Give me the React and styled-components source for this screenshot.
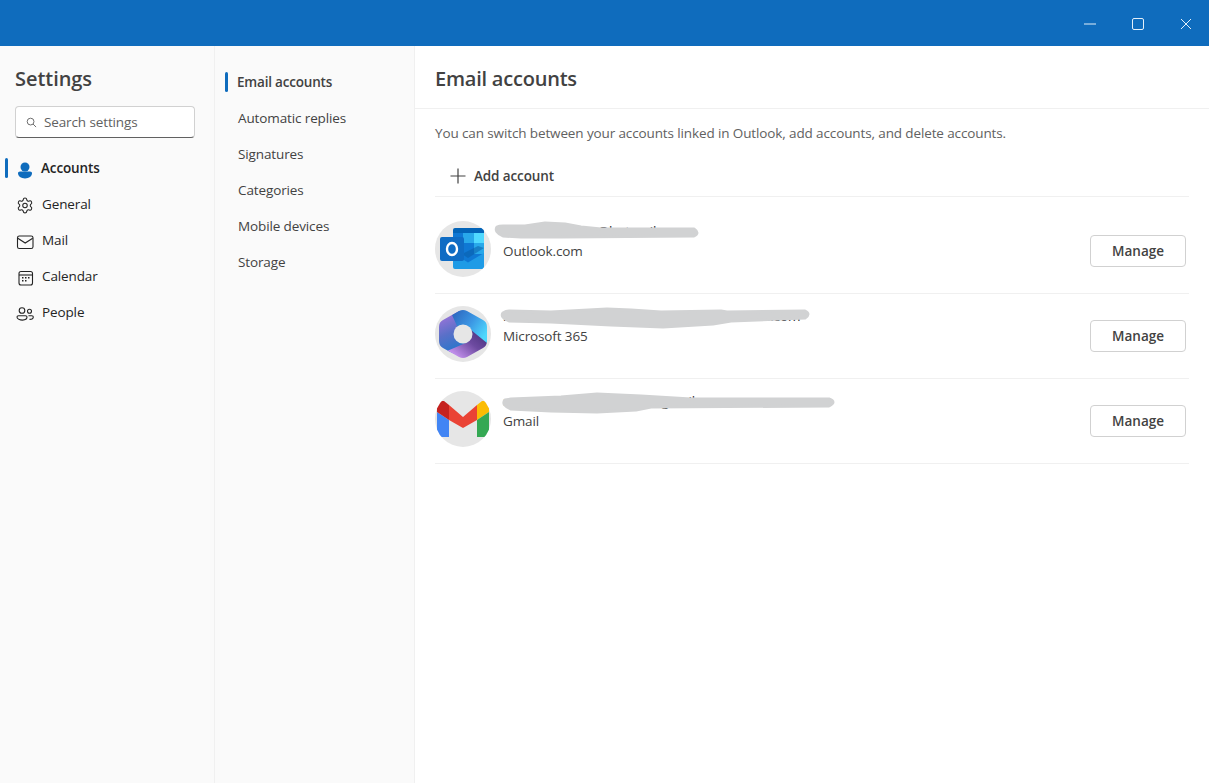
import React from 'react';
import styled, { createGlobalStyle } from 'styled-components';
import { Settings as GearIcon } from 'lucide-react';

const GlobalStyle = createGlobalStyle`
   html, body { margin: 0; height: 100%; background: #fff; }
   body { font-family: "Open Sans", "Noto Sans", "Liberation Sans", sans-serif; font-size: 13.5px; letter-spacing: -0.12px; color: #424242; }
   * { box-sizing: border-box; }
`;

const Page = styled.div`
   display: flex;
   flex-direction: column;
   height: 100vh;
   overflow: hidden;
`;

const TitleBar = styled.div`
   height: 46px;
   flex-shrink: 0;
   background: #0f6cbd;
   display: flex;
   justify-content: flex-end;
`;

const WindowButton = styled.div`
   width: 48px;
   padding: 1px 0 0 2px;
   display: flex;
   align-items: center;
   justify-content: center;
   color: #e3eff9;
`;

const Body = styled.div`
   flex: 1;
   display: flex;
   min-height: 0;
`;

const Rail = styled.nav`
   width: 215px;
   flex-shrink: 0;
   background: #fafafa;
   border-right: 1px solid #f0f0f0;
`;

const RailTitle = styled.h1`
   margin: 0;
   padding: 20px 0 0 15px;
   height: 60px;
   font-size: 20px;
   line-height: 26px;
   font-weight: 600;
   color: #424242;
   letter-spacing: -0.05px;
`;

const SearchBox = styled.div`
   margin-left: 15px;
   width: 180px;
   height: 32px;
   background: #fff;
   border: 1px solid #d1d1d1;
   border-bottom-color: #616161;
   border-radius: 4px;
   display: flex;
   align-items: center;
   gap: 7px;
   padding-left: 10px;
   color: #616161;
`;

const RailList = styled.div`
   margin-top: 12px;
   padding-left: 5px;
`;

const RailItem = styled.div`
   position: relative;
   height: 36px;
   display: flex;
   align-items: center;
   gap: ${({ $active }) => ($active ? '7px' : '8px')};
   padding-left: 11px;
   color: #242424;
   font-weight: ${({ $active }) => ($active ? 600 : 400)};

   &::before {
      content: '';
      display: ${({ $active }) => ($active ? 'block' : 'none')};
      position: absolute;
      left: 0;
      top: 8px;
      width: 3px;
      height: 20px;
      border-radius: 2px;
      background: #0f6cbd;
   }
`;

const RailIcon = styled.span`
   width: 18px;
   height: 18px;
   margin-top: 3px;
   display: flex;
   align-items: center;
   justify-content: center;
   color: #242424;
`;

const SubNav = styled.nav`
   width: 200px;
   flex-shrink: 0;
   background: #fafafa;
   border-right: 1px solid #f0f0f0;
   padding: 18px 0 0 10px;
`;

const SubItem = styled.div`
   position: relative;
   height: 36px;
   display: flex;
   align-items: center;
   padding-left: ${({ $active }) => ($active ? '12px' : '13px')};
   color: #424242;
   font-weight: ${({ $active }) => ($active ? 600 : 400)};
   letter-spacing: ${({ $active }) => ($active ? '-0.2px' : '-0.12px')};

   &::before {
      content: '';
      display: ${({ $active }) => ($active ? 'block' : 'none')};
      position: absolute;
      left: 0;
      top: 8px;
      width: 3px;
      height: 20px;
      border-radius: 2px;
      background: #0f6cbd;
   }
`;

const Main = styled.main`
   flex: 1;
   min-width: 0;
   background: #fff;
`;

const MainHeader = styled.header`
   height: 63px;
   padding: 20px 0 0 20px;
   border-bottom: 1px solid #f0f0f0;
`;

const MainTitle = styled.h2`
   margin: 0;
   font-size: 20px;
   line-height: 26px;
   font-weight: 600;
   color: #424242;
   letter-spacing: -0.22px;
`;

const MainBody = styled.div`
   padding: 14px 20px 0;
`;

const Intro = styled.p`
   margin: 0;
   line-height: 20px;
   color: #616161;
`;

const AddRow = styled.div`
   margin-top: 13px;
   height: 41px;
   padding-left: 15px;
   display: flex;
   align-items: center;
   gap: 8px;
   font-weight: 600;
   color: #424242;
   border-bottom: 1px solid #f0f0f0;
`;

const AccountList = styled.div`
   margin-top: 12px;
`;

const AccountRow = styled.div`
   height: 85px;
   padding: 12px 3px 0 0;
   display: flex;
   align-items: flex-start;
   border-bottom: 1px solid #f0f0f0;
`;

const Avatar = styled.div`
   width: 56px;
   height: 56px;
   flex-shrink: 0;
   border-radius: 50%;
   overflow: hidden;
   background: #e6e6e6;
`;

const AccountInfo = styled.div`
   position: relative;
   flex: 1;
   margin: 1px 0 0 12px;
   line-height: 20px;
`;

const AccountMail = styled.div`
   color: #242424;
   height: 20px;
   margin-top: -1px;
   white-space: nowrap;
`;

const AccountType = styled.div`
   color: #424242;
`;

const Redaction = styled.svg`
   position: absolute;
   left: -12px;
   top: -4px;
`;

const ManageButton = styled.button`
   margin-top: 14px;
   width: 96px;
   height: 32px;
   background: #fff;
   border: 1px solid #d1d1d1;
   border-radius: 4px;
   font: inherit;
   font-weight: 600;
   color: #424242;
   letter-spacing: 0;
`;

const PersonIcon = () => (
   <svg width="18" height="18" viewBox="0 0 18 18" fill="#0f6cbd">
      <circle cx="9" cy="6" r="4.500" />
      <path d="M4 10.500h10c1.200 0 2 .8 2 1.800 0 3-3 5.200-7 5.200s-7-2.200-7-5.200c0-1 .8-1.800 2-1.800z" />
   </svg>
);

const MailIcon = () => (
   <svg width="18" height="18" viewBox="0 0 18 18" fill="none" stroke="currentColor" strokeWidth="1.100">
      <rect x="1.500" y="3" width="15.500" height="12.500" rx="1.800" />
      <path d="M1.800 5.300 9.200 10l7.500-4.700" />
   </svg>
);

const CalendarIcon = () => (
   <svg width="18" height="18" viewBox="0 0 18 18" fill="none" stroke="currentColor" strokeWidth="1.100">
      <rect x="3" y="2.500" width="13.500" height="13.500" rx="2" />
      <path d="M3 6h13.500" />
      <g fill="currentColor" stroke="none">
         <rect x="6" y="8" width="1.500" height="1.500" />
         <rect x="9" y="8" width="1.500" height="1.500" />
         <rect x="12" y="8" width="1.500" height="1.500" />
         <rect x="6" y="11" width="1.500" height="1.500" />
         <rect x="9" y="11" width="1.500" height="1.500" />
      </g>
   </svg>
);

const PeopleIcon = () => (
   <svg width="18" height="18" viewBox="0 0 18 18" fill="none" stroke="currentColor" strokeWidth="1.100">
      <circle cx="6" cy="5.500" r="2.800" />
      <circle cx="13.500" cy="6.300" r="2" />
      <path d="M2.500 10.700h7c.9 0 1.500.6 1.500 1.400 0 1.900-2 3-4.500 3s-5.500-1.100-5.500-3c0-.8.600-1.400 1.500-1.400z" />
      <path d="M12.500 10.700h3.300c.9 0 1.500.6 1.500 1.300 0 1.500-1.500 2.400-3.800 2.400" />
   </svg>
);

const SearchIcon = () => (
   <svg width="11" height="11" viewBox="0 0 12 12" fill="none" stroke="#616161" strokeWidth="1">
      <circle cx="5" cy="5" r="3.700" />
      <path d="M7.700 7.700 11 11" />
   </svg>
);

const PlusIcon = () => (
   <svg width="16" height="16" viewBox="0 0 16 16" stroke="#424242" strokeWidth="1.200">
      <path d="M8 .5v15M.5 8h15" />
   </svg>
);

const OutlookLogo = () => (
   <svg width="56" height="56" viewBox="0 0 56 56">
      <path d="M18 9a2 2 0 0 1 2-2h27a2 2 0 0 1 2 2v12H18z" fill="#0364b8" />
      <rect x="18" y="12" width="10" height="10" fill="#0f78d4" />
      <rect x="28" y="12" width="11" height="10" fill="#28a8ea" />
      <rect x="39" y="12" width="10" height="10" fill="#50d9ff" />
      <rect x="18" y="22" width="10" height="11" fill="#0364b8" />
      <rect x="28" y="22" width="11" height="11" fill="#0f78d4" />
      <rect x="39" y="22" width="10" height="11" fill="#28a8ea" />
      <rect x="18" y="33" width="31" height="10" fill="#0f78d4" />
      <path d="M49 27 33 37l-6-4 16-8z" fill="#0a5ca8" opacity=".55" />
      <path d="M18 32l15 9.500L49 32v14a2 2 0 0 1-2 2H20a2 2 0 0 1-2-2z" fill="#1f9be6" />
      <rect x="5" y="16" width="24" height="24" rx="2" fill="#0f6cc4" />
      <ellipse cx="17" cy="28" rx="5" ry="6" fill="none" stroke="#fff" strokeWidth="2.400" />
   </svg>
);

const CopilotLogo = () => (
   <svg width="56" height="56" viewBox="0 0 56 56">
      <defs>
         <clipPath id="hexClip">
            <path d="M24 5Q28 3 32 5L48 14Q52 16 52 21V35Q52 40 48 42L32 51Q28 53 24 51L8 42Q4 40 4 35V21Q4 16 8 14Z" />
         </clipPath>
         <linearGradient id="ribbonTop" x1="0" y1="0" x2="1" y2="0.700">
            <stop offset="0" stopColor="#2b5fb8" />
            <stop offset="0.550" stopColor="#3b95e3" />
            <stop offset="1" stopColor="#4fd8fd" />
         </linearGradient>
         <linearGradient id="ribbonLeft" x1="0.300" y1="0" x2="0.600" y2="1">
            <stop offset="0" stopColor="#a874dc" />
            <stop offset="0.500" stopColor="#5a70c8" />
            <stop offset="1" stopColor="#1f78cc" />
         </linearGradient>
         <linearGradient id="ribbonBottom" x1="1" y1="0" x2="0" y2="1">
            <stop offset="0" stopColor="#3d2a70" />
            <stop offset="0.450" stopColor="#6d4aa0" />
            <stop offset="0.850" stopColor="#c794f0" />
         </linearGradient>
      </defs>
      <g clipPath="url(#hexClip)">
         <path d="M24 3 4 14v28l16 6L34 36 28 28z" fill="url(#ribbonLeft)" />
         <path d="M28 28 36 20 52 28V42L30 54H26L12 45 33 36z" fill="url(#ribbonBottom)" />
         <path d="M17 9 28 2 52 15V37L36 24 28 28 22 20z" fill="url(#ribbonTop)" />
      </g>
      <circle cx="28" cy="28" r="9.500" fill="#e6e6e6" />
   </svg>
);

const GmailLogo = () => (
   <svg width="56" height="56" viewBox="0 0 56 56">
      <path d="M2 21 14 29v17H5q-3 0-3-6z" fill="#4285f4" />
      <path d="M2 21v-4q0-8 7-7l5 4v15z" fill="#c5221f" />
      <path d="M14 14 28 26 42 14v15L28 37 14 29z" fill="#ea4335" />
      <path d="M42 14l5-4q7-1 7 7v4L42 29z" fill="#fbbc04" />
      <path d="M54 21v19q0 6-3 6h-9V29z" fill="#34a853" />
   </svg>
);

const accounts = [
   {
      mail: 'name.surname@hotmail.com',
      type: 'Outlook.com',
      logo: <OutlookLogo />,
      blob: 'M6 9Q8 8 12 8L34 8 54 5 74 6 90 9 110 11 203 11Q209 15 203 18L70 19 30 19 12 18Q3 14 6 9Z',
   },
   {
      mail: 'name.surname.account@company-domain.com',
      type: 'Microsoft 365',
      logo: <CopilotLogo />,
      blob: 'M12 10Q15 8 18 8L60 9 116 6 140 7 170 9 230 8 236 9 314 8Q320 11 314 15L240 18 222 21 172 24 120 22 60 19 18 18Q9 14 12 10Z',
   },
   {
      mail: 'name.surname.account@gmail.com',
      type: 'Gmail',
      logo: <GmailLogo />,
      blob: 'M14 12 20 11 70 9 106 6 150 8 200 11 338 11Q346 14 338 18L160 19 145 22 106 24 60 23 20 21Q10 17 14 12Z',
   },
];

const App = () => {
   return (
      <Page>
         <GlobalStyle />
         <TitleBar>
            <WindowButton>
               <svg width="12" height="12" viewBox="0 0 12 12" stroke="currentColor"><path d="M0 6h12" /></svg>
            </WindowButton>
            <WindowButton>
               <svg width="12" height="12" viewBox="0 0 12 12" fill="none" stroke="currentColor"><rect x=".5" y=".5" width="11" height="11" rx="1.500" /></svg>
            </WindowButton>
            <WindowButton>
               <svg width="12" height="12" viewBox="0 0 12 12" stroke="currentColor"><path d="M1 1l10 10M11 1 1 11" /></svg>
            </WindowButton>
         </TitleBar>
         <Body>
            <Rail>
               <RailTitle>Settings</RailTitle>
               <SearchBox><SearchIcon />Search settings</SearchBox>
               <RailList>
                  <RailItem $active><RailIcon><PersonIcon /></RailIcon>Accounts</RailItem>
                  <RailItem><RailIcon><GearIcon size={19} strokeWidth={1.4} /></RailIcon>General</RailItem>
                  <RailItem><RailIcon><MailIcon /></RailIcon>Mail</RailItem>
                  <RailItem><RailIcon><CalendarIcon /></RailIcon>Calendar</RailItem>
                  <RailItem><RailIcon><PeopleIcon /></RailIcon>People</RailItem>
               </RailList>
            </Rail>
            <SubNav>
               <SubItem $active>Email accounts</SubItem>
               <SubItem>Automatic replies</SubItem>
               <SubItem>Signatures</SubItem>
               <SubItem>Categories</SubItem>
               <SubItem>Mobile devices</SubItem>
               <SubItem>Storage</SubItem>
            </SubNav>
            <Main>
               <MainHeader><MainTitle>Email accounts</MainTitle></MainHeader>
               <MainBody>
                  <Intro>You can switch between your accounts linked in Outlook, add accounts, and delete accounts.</Intro>
                  <AddRow><PlusIcon />Add account</AddRow>
                  <AccountList>
                     {accounts.map((account) => (
                        <AccountRow key={account.type}>
                           <Avatar>{account.logo}</Avatar>
                           <AccountInfo>
                              <AccountMail>{account.mail}</AccountMail>
                              <AccountType>{account.type}</AccountType>
                              <Redaction width="360" height="30" viewBox="0 0 360 30">
                                 <path d={account.blob} fill="#d1d2d3" stroke="#d1d2d3" strokeWidth="3" strokeLinejoin="round" />
                              </Redaction>
                           </AccountInfo>
                           <ManageButton>Manage</ManageButton>
                        </AccountRow>
                     ))}
                  </AccountList>
               </MainBody>
            </Main>
         </Body>
      </Page>
   );
};

export default App;
